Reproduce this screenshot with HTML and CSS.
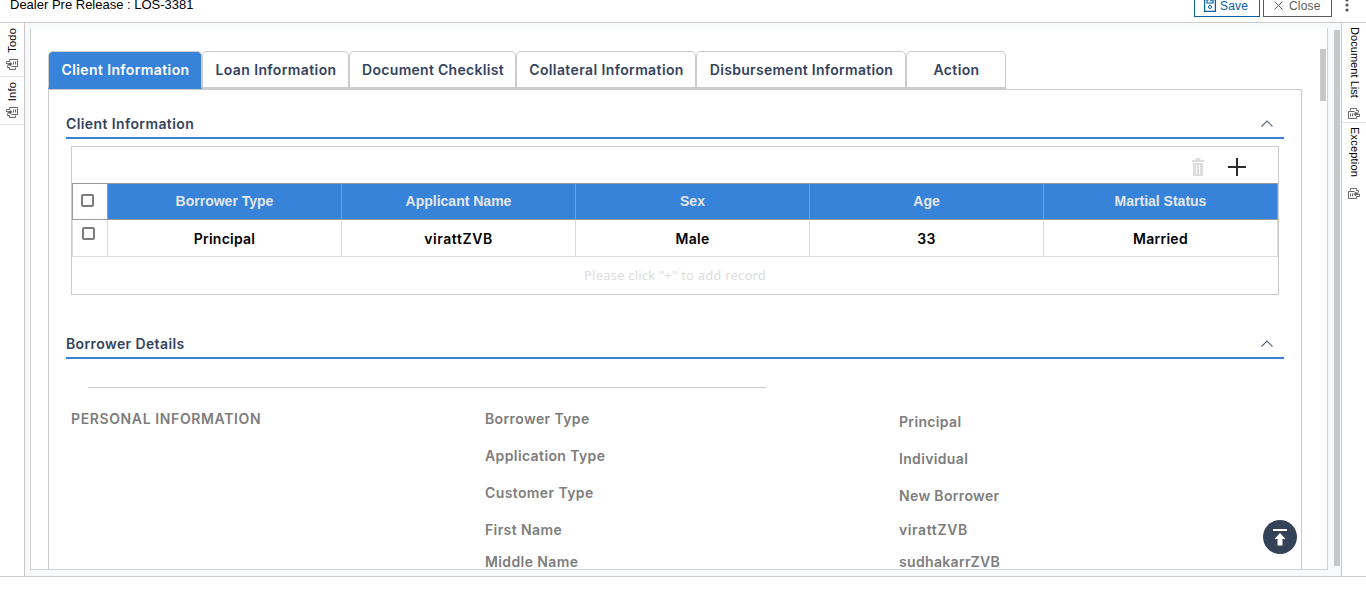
FILE: index.html
```html
<!DOCTYPE html>
<html lang="en">
<head>
<meta charset="utf-8">
<title>Dealer Pre Release</title>
<link rel="stylesheet" href="styles.css">
</head>
<body>
<svg class="defs" width="0" height="0">
  <symbol id="copy" viewBox="0 0 12 11">
    <g fill="none" stroke="#696969"><path d="M3.500 2.500v-2h8v7h-6M.5 5V2.500h3M1.500 6.500v2h2v2h6v-2M7.500 2.500v3M9.500 2.500v3"/><path d="M1 4h3V2.500L6.500 5 4 7.500V6.500H2z" fill="#696969" stroke="none"/></g>
  </symbol>
  <symbol id="chev" viewBox="0 0 12 7"><path d="M.5 6.500 6 1l5.500 5.500" fill="none" stroke="#596a82" stroke-width="1.200"/></symbol>
</svg>
<header class="topbar">
  <span class="title">Dealer Pre Release : LOS-3381</span>
  <div class="actions">
    <button class="btn save"><svg width="12" height="13" viewBox="0 0 12 13"><path d="M.6.600h10.800v11.800H.6zM3 .6v3.400h6V.6M7 1v1.500" fill="none" stroke="currentColor" stroke-width="1.200"/><circle cx="6" cy="8" r="1.500" fill="none" stroke="currentColor"/></svg>Save</button>
    <button class="btn close"><svg width="9" height="9" viewBox="0 0 9 9"><path d="m.5.5 8 8m0-8-8 8" stroke="currentColor"/></svg>Close</button>
    <svg class="dots" width="4" height="16" viewBox="0 0 4 16"><g fill="#555"><circle cx="2" cy="3" r="1.600"/><circle cx="2" cy="8" r="1.600"/><circle cx="2" cy="13" r="1.600"/></g></svg>
  </div>
</header>
<main class="workspace">
  <aside class="rail left">
    <div class="rail-item todo"><span>Todo</span><svg width="12" height="11"><use href="#copy"/></svg></div>
    <div class="rail-item info"><span>Info</span><svg width="12" height="11"><use href="#copy"/></svg></div>
  </aside>
  <section class="frame">
    <div class="sheet">
      <nav class="tabs">
        <a class="tab t1 active"><span>Client Information</span></a>
        <a class="tab t2"><span>Loan Information</span></a>
        <a class="tab t3"><span>Document Checklist</span></a>
        <a class="tab t4"><span>Collateral Information</span></a>
        <a class="tab t5"><span>Disbursement Information</span></a>
        <a class="tab t6"><span>Action</span></a>
      </nav>
      <div class="card">
        <h2 class="section-head"><span>Client Information</span><svg width="12" height="7"><use href="#chev"/></svg></h2>
        <div class="grid-box">
          <div class="tools">
            <svg width="12" height="18" viewBox="0 0 12 18"><path d="M3.500 0h5v2H12v2H0V2h3.500zM1 5h10v13H1z" fill="#ddd"/><path d="M4.500 7v9M7.500 7v9" stroke="#fff"/></svg>
            <svg width="18" height="18" viewBox="0 0 18 18"><path d="M9 0v18M0 9h18" stroke="#2b2b2b" stroke-width="2"/></svg>
          </div>
          <table>
            <thead><tr><th class="check"><i></i></th><th>Borrower Type</th><th>Applicant Name</th><th>Sex</th><th>Age</th><th>Martial Status</th></tr></thead>
            <tbody><tr><td class="check"><i></i></td><td>Principal</td><td class="wide">virattZVB</td><td>Male</td><td>33</td><td>Married</td></tr></tbody>
          </table>
          <p class="hint">Please click "+" to add record</p>
        </div>
        <h2 class="section-head details"><span>Borrower Details</span><svg width="12" height="7"><use href="#chev"/></svg></h2>
        <hr>
        <div class="fields">
          <div class="group">PERSONAL INFORMATION</div>
          <div class="names"><span>Borrower Type</span><span>Application Type</span><span>Customer Type</span><span>First Name</span><span>Middle Name</span></div>
          <div class="values"><span>Principal</span><span>Individual</span><span>New Borrower</span><span class="wide">virattZVB</span><span>sudhakarrZVB</span></div>
        </div>
      </div>
      <div class="thumb inner"></div>
      <button class="to-top"><svg width="14" height="17" viewBox="0 0 14 17"><path d="M0 0h14v2H0zM7 4l5.500 6H9.500v6.500h-5V10h-3z" fill="#fff"/></svg></button>
    </div>
    <div class="thumb outer"></div>
  </section>
  <aside class="rail right">
    <div class="rail-item docs"><span>Document List</span><svg width="12" height="11"><use href="#copy" transform="rotate(180 6 5.500)"/></svg></div>
    <div class="rail-item exc"><span>Exception</span><svg width="12" height="11"><use href="#copy" transform="rotate(180 6 5.500)"/></svg></div>
  </aside>
</main>
</body>
</html>
```
FILE: styles.css
```css
* { box-sizing: border-box; }
body { margin: 0; height: 589px; overflow: hidden; background: #fff; font: 600 14px/18px Inter, "Liberation Sans", sans-serif; letter-spacing: .39px; color: #34435e; }
.defs { position: absolute; }
svg { display: block; flex: none; }
.topbar { height: 23px; border-bottom: 1px solid #ccc; display: flex; justify-content: space-between; align-items: flex-start; padding: 0 17px 0 10px; overflow: hidden; font: 12px/14px "Liberation Sans", Arial, sans-serif; color: #000; }
.title { margin-top: -3px; font-size: 13px; line-height: 15px; letter-spacing: 0; }
.actions { display: flex; gap: 3px; }
.btn { display: flex; align-items: center; gap: 4px; height: 24px; margin-top: -7px; padding: 1px 9px 0 9px; border: 1px solid; background: #fff; font: inherit; letter-spacing: .2px; }
.save { width: 66px; color: #0662a5; }
.close { width: 69px; color: #5c5c5c; gap: 6px; padding-left: 10px; }
.dots { margin: -3px 0 0 10px; }
.workspace { height: 554px; display: flex; border-bottom: 1px solid #ccc; }
.rail { width: 25px; font: 11px/12px "Liberation Sans", Arial, sans-serif; color: #000; }
.left { border-right: 1px solid #c8c8c8; }
.right { border-left: 1px solid #c8c8c8; }
.rail-item { display: flex; flex-direction: column; align-items: center; border-bottom: 1px solid #e2e2e2; }
.rail-item span { writing-mode: vertical-rl; letter-spacing: .2px; }
.left span { transform: rotate(180deg); }
.todo { height: 54px; padding: 5px 0 6px; justify-content: space-between; }
.info { height: 48px; padding: 5px 0 6px; justify-content: space-between; }
.docs { height: 100px; padding: 4px 0 3px; justify-content: space-between; }
.docs span { letter-spacing: .05px; }
.exc { height: 79px; padding: 4px 0 3px; justify-content: space-between; border: 0; }
.right .rail-item span { padding-left: 1px; }
.frame { flex: 1; display: flex; padding: 5px 0 6px 5px; background: #f8f9fb; }
.sheet { position: relative; width: 1298px; border: 1px solid #d0d1d3; border-top: 0; background: #fff; padding: 23px 25px 0 17px; overflow: hidden; }
.tabs { display: flex; height: 38px; }
.tab { display: flex; align-items: center; justify-content: center; padding-left: 1px; border: 1px solid #ccc; border-bottom-width: 2px; border-radius: 5px 5px 0 0; }
.t1 { width: 154px; } .t2 { width: 147px; } .t3 { width: 167px; } .t4 { width: 180px; } .t5 { width: 210px; } .t6 { width: 100px; }
.t3, .t5 { letter-spacing: .29px; }
.active { background: #3883da; color: #fff; border-bottom-color: #3883da; }
.card { width: 1254px; height: 490px; border: 1px solid #ccc; padding: 20px 17px 0; }
.section-head { display: flex; justify-content: space-between; align-items: center; height: 29px; margin: 0; padding: 1px 11px 0 0; border-bottom: 2px solid #3883da; font: inherit; }
.section-head svg { margin-bottom: 2px; }
.grid-box { width: 1208px; height: 149px; margin: 7px 0 0 5px; border: 1px solid #ccc; }
.tools { height: 36px; display: flex; justify-content: flex-end; align-items: center; gap: 24px; padding: 4px 32px 0 0; }
table { width: 1206px; height: 74px; table-layout: fixed; border-collapse: collapse; }
th, td { height: 36.5px; padding: 0; border: 1px solid #ddd; text-align: center; }
th { height: 36px; padding-bottom: 2px; background: #3883da; border-color: #999; color: #e4e7ea; font: bold 14px/18px "Liberation Sans", Arial, sans-serif; letter-spacing: 0; }
td { color: #000; padding-top: 2px; letter-spacing: .25px; }
td.wide, .values .wide { letter-spacing: .6px; }
.check { width: 35px; background: #fff; }
.check i { display: block; width: 13px; height: 13px; margin: -1px 0 0 8px; border: 2px solid #7c7c7c; border-radius: 2px; }
td.check i { margin: -12px 0 0 9px; }
.hint { margin: 9px 0 0; text-align: center; font: 13px/18px "Noto Sans", sans-serif; letter-spacing: .2px; color: #ddd; }
.details { margin-top: 35px; }
hr { width: 678px; margin: 28px 0 0 22px; border: 0; border-top: 1px solid #ccc; }
.fields { display: grid; grid-template-columns: 414px 414px 1fr; padding: 22px 0 0 5px; color: #7d7d7d; }
.group { letter-spacing: .62px; }
.names, .values { display: grid; grid-template-rows: 37px 37px 37px 32px 18px; }
.values { padding-top: 3px; grid-template-rows: 37px 37px 34px 32px 18px; }
.values span { letter-spacing: .34px; }
.thumb { background: #c7c7c7; }
.inner { position: absolute; right: 1px; top: 21px; width: 6px; height: 52px; }
.outer { width: 6px; height: 536px; margin: 2px 0 0 6px; }
.to-top { position: absolute; left: 1232px; top: 492px; width: 34px; height: 34px; padding: 0; border: 0; border-radius: 50%; background: #344258; display: flex; align-items: center; justify-content: center; }
```
